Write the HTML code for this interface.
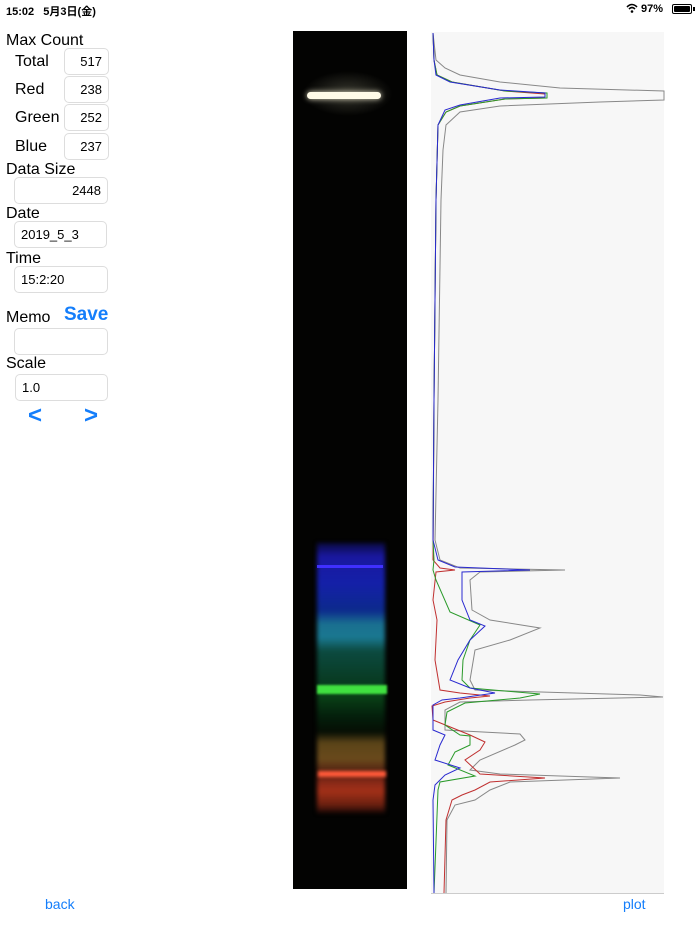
<!DOCTYPE html>
<html><head><meta charset="utf-8">
<style>
*{margin:0;padding:0;box-sizing:border-box}
body{width:700px;height:934px;background:#fff;position:relative;overflow:hidden;font-family:"Liberation Sans","Noto Sans CJK JP",sans-serif;color:#000}
.a{position:absolute}
.lbl{font-size:16px}
.box{position:absolute;border:1px solid #ddd;border-radius:5px;background:#fff;font-size:13px;line-height:26px;height:27px}
.r{text-align:right;padding-right:6px}
.l{padding-left:6px}
.blue{color:#147efb}
</style></head><body>
<div class="a" style="left:6px;top:3px;font-size:11px;font-weight:bold">15:02&nbsp;&nbsp;&nbsp;5月3日(金)</div>
<div class="a" style="left:626px;top:3px;font-size:11px;font-weight:bold">
<svg width="12" height="10" viewBox="0 0 12 10" style="vertical-align:-1px"><path d="M1 4 Q6 -1 11 4" stroke="#000" stroke-width="1.6" fill="none"/><path d="M3 6 Q6 3 9 6" stroke="#000" stroke-width="1.6" fill="none"/><circle cx="6" cy="8.5" r="1.3"/></svg> 97%</div>
<div class="a" style="left:672px;top:4px;width:20px;height:10px;border:1px solid #000;border-radius:2px;padding:1px"><div style="width:100%;height:100%;background:#000;border-radius:1px"></div></div>
<div class="a" style="left:693px;top:7px;width:2px;height:4px;background:#000"></div>

<div class="a lbl" style="left:6px;top:32px">Max Count</div>
<div class="a lbl" style="left:15px;top:53px">Total</div>
<div class="box r" style="left:64px;top:48px;width:45px">517</div>
<div class="a lbl" style="left:15px;top:81px">Red</div>
<div class="box r" style="left:64px;top:76px;width:45px">238</div>
<div class="a lbl" style="left:15px;top:109px">Green</div>
<div class="box r" style="left:64px;top:104px;width:45px">252</div>
<div class="a lbl" style="left:15px;top:138px">Blue</div>
<div class="box r" style="left:64px;top:133px;width:45px">237</div>
<div class="a lbl" style="left:6px;top:161px">Data Size</div>
<div class="box r" style="left:14px;top:177px;width:94px">2448</div>
<div class="a lbl" style="left:6px;top:205px">Date</div>
<div class="box l" style="left:14px;top:221px;width:93px">2019_5_3</div>
<div class="a lbl" style="left:6px;top:250px">Time</div>
<div class="box l" style="left:14px;top:266px;width:94px">15:2:20</div>
<div class="a lbl" style="left:6px;top:309px">Memo</div>
<div class="a blue" style="left:64px;top:304px;font-size:19px;font-weight:bold">Save</div>
<div class="box" style="left:14px;top:328px;width:94px"></div>
<div class="a lbl" style="left:6px;top:355px">Scale</div>
<div class="box l" style="left:15px;top:374px;width:93px">1.0</div>
<div class="a blue" style="left:28px;top:402px;font-size:24px;font-weight:bold">&lt;</div>
<div class="a blue" style="left:84px;top:402px;font-size:24px;font-weight:bold">&gt;</div>

<div class="a blue" style="left:45px;top:896px;font-size:14px">back</div>
<div class="a blue" style="left:623px;top:896px;font-size:14px">plot</div>

<div class="a" style="left:293px;top:31px;width:114px;height:858px;background:#030302;overflow:hidden">
 <div class="a" style="left:10px;top:40px;width:90px;height:45px;background:radial-gradient(ellipse at center,rgba(120,120,100,.45),rgba(0,0,0,0) 70%)"></div>
 <div class="a" style="left:14px;top:61px;width:74px;height:7px;background:#fffbe8;border-radius:4px;box-shadow:0 0 6px #ddd8c0"></div>
 <div class="a" style="left:24px;top:512px;width:68px;height:270px;filter:blur(2px);background:linear-gradient(#0a0a40 0%,#1a18a0 5%,#1420a8 15%,#0c2a8c 25%,#1a7090 30%,#1a7890 35%,#0c4a40 40%,#083a20 52%,#0a4418 56%,#04200c 64%,#060e04 70%,#5a4418 74%,#6a4a1c 80%,#501e10 85%,#8c2a18 89%,#a23018 92%,#6a2010 97%,#1a0806 100%)"></div>
 <div class="a" style="left:24px;top:534px;width:66px;height:3px;background:#4030ff"></div>
 <div class="a" style="left:24px;top:654px;width:70px;height:9px;background:#40e040;filter:blur(1px)"></div>
 <div class="a" style="left:25px;top:740px;width:68px;height:6px;background:#ff5a3a;filter:blur(1.5px)"></div>
</div>

<div class="a" style="left:431px;top:32px;width:233px;height:862px;background:#f7f7f7;border-bottom:1px solid #ccc"></div>
<svg class="a" style="left:0;top:0" width="700" height="934" fill="none" stroke-width="1">
<polyline stroke="#888" points="433,33 436,60 445,68 460,75 500,82 560,88 664,91 664,100 600,102 500,106 460,112 446,125 443,150 441,200 438,400 435,540 440,560 460,568 565,570 480,572 470,580 472,610 490,620 540,628 510,640 475,650 470,680 475,690 640,695 663,697 530,700 460,702 445,710 445,730 520,734 525,740 515,745 480,760 470,770 500,774 620,778 510,782 490,790 475,800 455,805 447,820 446,893"/>
<polyline stroke="#c03030" points="433,33 434,60 437,75 452,82 505,91 545,94 545,98 505,99 460,106 446,112 438,125 436,200 434,400 433,560 440,568 455,570 436,572 433,600 437,620 435,660 440,690 460,693 490,696 470,698 445,702 432,706 433,720 470,735 485,742 480,750 465,760 480,774 545,778 490,782 475,790 462,795 452,800 446,820 444,893"/>
<polyline stroke="#2a9a2a" points="433,33 434,60 437,75 452,82 505,91 547,93 547,98 505,99 460,106 446,112 438,125 436,200 434,400 433,540 434,560 433,570 436,580 450,612 480,625 470,640 463,660 462,680 470,688 540,694 520,698 465,703 447,712 445,725 460,735 470,736 470,745 455,752 448,765 475,776 440,782 438,790 434,893"/>
<polyline stroke="#2a2ad0" points="433,33 434,60 436,75 450,82 500,90 545,93 545,97 500,98 460,105 445,110 438,125 436,200 434,400 433,540 438,560 455,567 530,570 462,572 462,600 470,620 485,626 470,640 458,660 450,680 470,688 495,693 460,698 442,700 433,705 433,730 445,735 440,745 435,760 460,768 445,775 435,785 433,800 434,893"/>
</svg>
</body></html>
